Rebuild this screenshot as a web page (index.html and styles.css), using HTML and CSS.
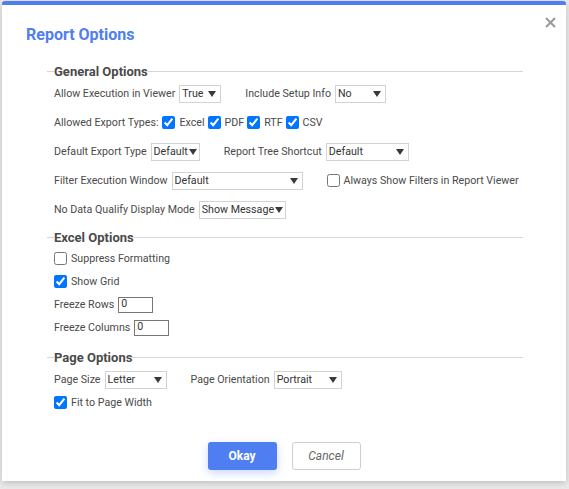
FILE: index.html
```html
<!DOCTYPE html>
<html>
<head>
<meta charset="utf-8">
<link rel="stylesheet" href="styles.css">
</head>
<body>
<div class="dialog">
  <button class="close" aria-label="Close">
    <svg width="11" height="11" viewBox="0 0 11 11"><path d="M1 1L10 10M10 1L1 10" stroke="#9a9a9a" stroke-width="2"/></svg>
  </button>
  <h1 class="title">Report Options</h1>

  <div class="body">
    <div class="legend"><span>General Options</span></div>
    <div class="row">
      <span class="lbl">Allow Execution in Viewer</span>
      <div class="select w-true"><span>True</span><i class="tri"></i></div>
      <span class="lbl sp">Include Setup Info</span>
      <div class="select w-no"><span>No</span><i class="tri"></i></div>
    </div>
    <div class="row types">
      <span class="lbl">Allowed Export Types:</span>
      <label class="chk"><input type="checkbox" checked>Excel</label>
      <label class="chk"><input type="checkbox" checked>PDF</label>
      <label class="chk"><input type="checkbox" checked>RTF</label>
      <label class="chk"><input type="checkbox" checked>CSV</label>
    </div>
    <div class="row">
      <span class="lbl">Default Export Type</span>
      <div class="select tight"><span>Default</span><i class="tri"></i></div>
      <span class="lbl sp">Report Tree Shortcut</span>
      <div class="select w-tree"><span>Default</span><i class="tri"></i></div>
    </div>
    <div class="row">
      <span class="lbl">Filter Execution Window</span>
      <div class="select w-filter"><span>Default</span><i class="tri"></i></div>
      <label class="chk sp"><input type="checkbox">Always Show Filters in Report Viewer</label>
    </div>
    <div class="row">
      <span class="lbl">No Data Qualify Display Mode</span>
      <div class="select tight"><span>Show Message</span><i class="tri"></i></div>
    </div>

    <div class="legend excel"><span>Excel Options</span></div>
    <div class="row sm first-excel">
      <label class="chk"><input type="checkbox">Suppress Formatting</label>
    </div>
    <div class="row sm">
      <label class="chk"><input type="checkbox" checked>Show Grid</label>
    </div>
    <div class="row sm">
      <span class="lbl">Freeze Rows</span>
      <div class="num">0</div>
    </div>
    <div class="row sm">
      <span class="lbl">Freeze Columns</span>
      <div class="num">0</div>
    </div>

    <div class="legend page"><span>Page Options</span></div>
    <div class="row sm first-page">
      <span class="lbl">Page Size</span>
      <div class="select w-letter"><span>Letter</span><i class="tri"></i></div>
      <span class="lbl sp">Page Orientation</span>
      <div class="select w-portrait"><span>Portrait</span><i class="tri"></i></div>
    </div>
    <div class="row sm">
      <label class="chk"><input type="checkbox" checked>Fit to Page Width</label>
    </div>
  </div>

  <div class="buttons">
    <button class="btn ok">Okay</button>
    <button class="btn cancel">Cancel</button>
  </div>
</div>
</body>
</html>
```

FILE: styles.css
```css
html, body {
  margin: 0;
  padding: 0;
}
body {
  background: #e9e9e9;
  width: 569px;
  height: 489px;
  overflow: hidden;
  font-family: Roboto, "Liberation Sans", Arial, sans-serif;
  color: #4a4a4a;
}
.dialog {
  position: relative;
  box-sizing: border-box;
  margin: 1px 0 0 2px;
  width: 564px;
  height: 480px;
  background: #fff;
  border-top: 4px solid #4f7ef3;
  border-radius: 3px 3px 0 0;
  box-shadow: 0 2px 6px rgba(0, 0, 0, 0.18);
}
.close {
  position: absolute;
  top: 12px;
  right: 10px;
  width: 11px;
  height: 11px;
  padding: 0;
  border: 0;
  background: none;
  display: flex;
}
.title {
  margin: 0;
  padding: 20px 0 0 24px;
  font-size: 16px;
  line-height: 20px;
  font-weight: 700;
  color: #4f7ef3;
}
.body {
  margin: 18px 0 0 45px;
  width: 476px;
}
.legend {
  display: flex;
  align-items: center;
  height: 16px;
  font-size: 13px;
  font-weight: 700;
  color: #4a4a4a;
}
.legend::before {
  content: "";
  width: 7px;
  border-top: 1px solid #d6d6d6;
}
.legend::after {
  content: "";
  flex: 1;
  border-top: 1px solid #d6d6d6;
}
.legend.excel { margin-top: 5px; }
.legend.page { margin-top: 10px; }
.row {
  display: flex;
  align-items: center;
  height: 29px;
  padding-left: 7px;
  font-size: 8pt;
  white-space: nowrap;
}
.row.sm { height: 23px; }
.row.first-excel { margin-top: 2px; }
.row.first-page { margin-top: 3px; }
.lbl { margin-right: 4px; }
.sp { margin-left: 24px; }
.select {
  box-sizing: border-box;
  display: flex;
  align-items: center;
  height: 18px;
  padding: 0 4px 0 2px;
  border: 1px solid #d3d3d3;
  color: #333;
}
.select span { flex: 1; }
.select.tight { padding-right: 2px; }
.tri {
  width: 0;
  height: 0;
  border-left: 4.5px solid transparent;
  border-right: 4.5px solid transparent;
  border-top: 6px solid #3a3a3a;
  margin-left: 1px;
}
.w-true { width: 42px; }
.w-no { width: 51px; }
.w-tree { width: 83px; }
.w-filter { width: 131px; }
.w-letter { width: 62px; }
.w-portrait { width: 68px; }
.chk {
  display: flex;
  align-items: center;
}
.chk input {
  width: 13px;
  height: 13px;
  margin: 0 4px 0 0;
}
.types .chk { margin-right: 3px; }
.num {
  box-sizing: border-box;
  width: 35px;
  height: 16px;
  border: 1px solid #767676;
  padding: 0 2px;
  line-height: 12px;
  color: #333;
}
.buttons {
  position: absolute;
  left: 0;
  right: 0;
  top: 437px;
  display: flex;
  justify-content: center;
  gap: 15px;
}
.btn {
  box-sizing: border-box;
  width: 69px;
  height: 28px;
  border-radius: 3px;
  font-family: Roboto, "Liberation Sans", Arial, sans-serif;
  font-size: 12px;
  cursor: pointer;
}
.ok {
  background: #4f7ef3;
  border: 0;
  color: #fff;
  font-weight: 700;
  box-shadow: 0 3px 8px rgba(79, 126, 243, 0.3);
}
.cancel {
  background: #fff;
  border: 1px solid #cfcfcf;
  color: #666;
  font-style: italic;
}
```
